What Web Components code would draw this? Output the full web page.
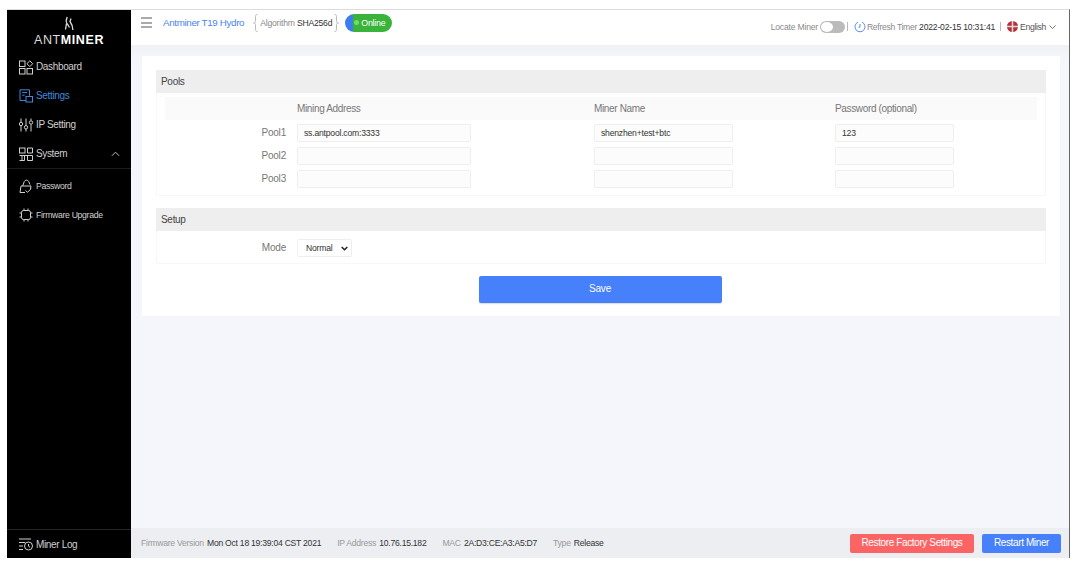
<!DOCTYPE html>
<html><head><meta charset="utf-8"><style>
html,body{margin:0;height:100%;background:#fff;font-family:"Liberation Sans",Arial,sans-serif}
body{padding:9px 6px 9px 7px;box-sizing:border-box;height:567px;overflow:hidden}
</style></head><body>
<am-app>
  <am-sidebar slot="side"></am-sidebar>
  <am-header slot="head"></am-header>
  <am-settings slot="main"></am-settings>
  <am-footer slot="foot"></am-footer>
</am-app>
<script>
const def=(n,html,init)=>customElements.define(n,class extends HTMLElement{
  constructor(){super();this.attachShadow({mode:'open'}).innerHTML=html;}
  connectedCallback(){init&&init(this)}
});
def('am-app',`<style>:host{display:grid;grid-template-columns:124px 1fr;grid-template-rows:35px 1fr 30px;height:549px;background:#f4f6fc;border-top:1px solid #dcdcdc;border-right:1px solid #666;box-sizing:border-box}
::slotted([slot=side]){grid-row:1/4}</style><slot name="side"></slot><slot name="head"></slot><slot name="main"></slot><slot name="foot"></slot>`);

def('am-nav',`<style>:host{display:flex;align-items:center;height:29px;padding-left:11px;font-size:10px;letter-spacing:-.35px;color:#d0d0d0;gap:2px;position:relative}
:host([active]){color:#3f88dc}:host([small]){font-size:8.700px;letter-spacing:-.33px}
svg{width:16px;height:16px;fill:none;stroke:currentColor;stroke-width:1;flex:none}
.c{margin-left:auto;margin-right:11px;display:flex}</style><span id="i" style="display:flex"></span><slot></slot>`,
 el=>{const p={
  dash:'<rect x="1.500" y="2" width="5.500" height="5.500"/><rect x="1.500" y="9.500" width="5.500" height="5.500"/><rect x="9" y="9.500" width="5.500" height="5.500"/><path d="M11.800 1.800l2.900 2.900-2.900 2.900-2.900-2.900z"/>',
  set:'<path d="M8 12.500H2V1.800h9.500v6"/><path d="M4.200 4.600h5M4.200 7.200h2.500"/><rect x="8" y="8.500" width="6.500" height="5.500"/>',
  ip:'<path d="M3 1.500v3.500M3 9v5.500M8 1.500v7M8 12v2.500M13 1.500v2M13 7.500v7"/><circle cx="3" cy="7" r="1.700"/><circle cx="8" cy="10.300" r="1.700"/><circle cx="13" cy="5.500" r="1.700"/>',
  sys:'<rect x="1.500" y="2" width="5.500" height="5"/><path d="M9.500 7V2h5v5h-5M1.500 9.500h13M4 9.500v5M1.500 14.500h5v-5M9.500 14.500h5v-5M9.500 9.500v5"/>',
  pw:'<path d="M7 14.500H2l1-6.500h10l-.5 3M4.700 8l1.600-4.500C7 1.800 9.800 1.600 10.600 3.400L12 6.500"/><path d="M7.500 12.500l2 1.800 3.500-3.500"/>',
  fw:'<rect x="3.500" y="3.500" width="9" height="9" rx="2"/><path d="M6 1.500v2M10 1.500v2M6 12.500v2M10 12.500v2M1.500 6h2M1.500 10h2M12.500 6h2M12.500 10h2"/>',
  log:'<path d="M1 3h12M1 6.500h6M1 10h4M1 13.500h4"/><circle cx="10.500" cy="10" r="4"/><path d="M10.500 8v2.200l1.500 1"/>'
 }[el.getAttribute('icon')];
 el.shadowRoot.getElementById('i').innerHTML='<svg viewBox="0 0 16 16">'+p+'</svg>';
 if(el.hasAttribute('chev')){const c=document.createElement('span');c.className='c';c.innerHTML='<svg viewBox="0 0 10 6" style="width:9px;height:6px"><path d="M1 5l4-4 4 4"/></svg>';el.shadowRoot.appendChild(c)}
});

def('am-sidebar',`<style>:host{display:flex;flex-direction:column;background:#000;color:#ddd}
.logo{height:35px;display:flex;flex-direction:column;align-items:center;padding-top:6px;font-size:12.500px;letter-spacing:.6px;color:#ddd;line-height:13px}
.logo svg{width:12px;height:16px;fill:none;stroke:#ddd;stroke-width:1.300;margin-bottom:2px;flex:none}
.logo b{color:#fff;font-weight:700}
.main{flex:1;padding-top:1px}
.sub{border-top:1px solid #1c1c1c;padding-top:2px}
.foot{border-top:1px solid #262626;height:28px;display:flex;align-items:center}
am-nav{flex:1}</style>
<div class="logo"><svg viewBox="0 0 12 16"><path d="M4.200 1L3.200 4.500c-.5 2 .6 3 1.800 4.500l1.500 2.500M8 2.500L7 5.500c1.600 2 2.600 4.500 2.900 8.500M3.500 7.500L2.500 13.500"/></svg><span>ANT<b>MINER</b></span></div>
<div class="main">
<am-nav icon="dash">Dashboard</am-nav>
<am-nav icon="set" active>Settings</am-nav>
<am-nav icon="ip">IP Setting</am-nav>
<am-nav icon="sys" chev>System</am-nav>
<div class="sub"><am-nav icon="pw" small>Password</am-nav><am-nav icon="fw" small>Firmware Upgrade</am-nav></div>
</div>
<div class="foot"><am-nav icon="log">Miner Log</am-nav></div>`);

def('am-header',`<style>:host{display:flex;align-items:center;background:#fff;height:35px;padding:0 13px 0 10px;font-size:8.600px;letter-spacing:-.2px;color:#8a8a8a;box-sizing:border-box}
.l{display:flex;align-items:center;margin-bottom:10px}
.burger{width:11px;height:11px;margin-right:11px;border-top:2px solid #aaa;border-bottom:2px solid #aaa;position:relative;box-sizing:border-box}
.burger:after{content:"";position:absolute;left:0;right:0;top:2.500px;border-top:2px solid #aaa}
.t{color:#4c84ef;font-size:9.800px;letter-spacing:-.35px;margin-right:9px}
.alg{display:flex;align-items:center;gap:2px;margin-right:6px}
.br{fill:none;stroke:#bbb;flex:none}
.v{color:#333}
.on{display:flex;align-items:center;height:18px;width:47px;border-radius:9px;background:linear-gradient(90deg,#3d7cf0 0,#3d7cf0 7px,#39b339 9px);color:#fff;font-size:8.800px;padding-left:9px;box-sizing:border-box;gap:2px}
.dot{width:5px;height:5px;border-radius:50%;background:#73e05a}
.sp{flex:1}
.r{display:flex;align-items:center;margin-bottom:2px}
.sw{width:25px;height:12px;border-radius:6px;background:#bbb;margin:0 2px;position:relative}
.sw:after{content:"";position:absolute;left:1px;top:1px;width:12px;height:10px;border-radius:50%;background:#fff}
.bar{width:1px;height:9px;background:#bbb;margin:0 6px 0 0}
.lang{color:#555;letter-spacing:-.33px}
.rt{letter-spacing:-.3px}.rt .v{letter-spacing:-.2px}
svg{flex:none}</style>
<div class="l"><div class="burger"></div><span class="t">Antminer T19 Hydro</span>
<div class="alg"><svg class="br" width="5" height="18" viewBox="0 0 5 18"><path d="M4.500 .5C2 .5 2.500 2 2.500 4v3.500C2.500 8.500 1.500 9 .5 9c1 0 2 .5 2 1.500V14c0 2-.5 3.500 2 3.500"/></svg><span>Algorithm&nbsp;<span class="v">SHA256d</span></span><svg class="br" width="5" height="18" viewBox="0 0 5 18" style="transform:scaleX(-1)"><path d="M4.500 .5C2 .5 2.500 2 2.500 4v3.500C2.500 8.500 1.500 9 .5 9c1 0 2 .5 2 1.500V14c0 2-.5 3.500 2 3.500"/></svg></div>
<div class="on"><span class="dot"></span>Online</div></div>
<div class="sp"></div>
<div class="r"><span>Locate Miner</span><span class="sw"></span><span class="bar"></span>
<svg width="12" height="12" viewBox="0 0 12 12" style="margin-right:1px" fill="none" stroke="#5c8cec"><path d="M4 1.200A5 5 0 1 0 8 1.200"/><path d="M6 3v3.200H4.500"/></svg>
<span class="rt">Refresh Timer&nbsp;<span class="v">2022-02-15 10:31:41</span></span><span class="bar" style="margin:0 6px 0 5px"></span>
<svg width="11" height="11" viewBox="0 0 11 11" style="margin-right:2px"><circle cx="5.500" cy="5.500" r="5.500" fill="#b5303a"/><path d="M5.500 0v11M0 5.500h11" stroke="#e8d5d5" stroke-width="1.600"/></svg>
<span class="lang">English</span>
<svg width="7" height="4" viewBox="0 0 7 4" style="margin-left:3px" fill="none" stroke="#777"><path d="M.5.5l3 3 3-3"/></svg></div>`);

def('am-section',`<style>:host{display:block;border:1px solid #f7f7f7;border-top:0}
.h{background:#eee;height:23px;line-height:23px;padding-left:5px;font-size:10px;letter-spacing:-.3px;color:#444;margin:0 -1px}</style>
<div class="h"><slot name="title"></slot></div><slot></slot>`);

def('am-input',`<style>:host{display:block}.i{height:18px;line-height:17px;box-sizing:border-box;border:1px solid #eee;border-radius:2px;background:#fcfcfc;font-size:8.600px;letter-spacing:-.2px;color:#333;padding-left:6px}</style><div class="i"><slot></slot></div>`);

def('am-settings',`<style>:host{display:block;padding:11px 9px 0 11px;background:linear-gradient(#eff1f5,#f4f6fc 14px)}
.card{background:#fff;padding:14px;height:260px;box-sizing:border-box;display:flex;flex-direction:column}
.grid{display:grid;grid-template-columns:140px 297px 241px 1fr;padding-bottom:2px;font-size:10px;letter-spacing:-.2px;color:#777}
.hd{grid-column:1/5;display:grid;grid-template-columns:132px 297px 241px 1fr;background:#fafafa;margin:4px 8px 4px 8px;height:23px;align-items:center;font-size:10px;letter-spacing:-.35px}
.hd span:first-child{grid-column:2}
.l{text-align:right;padding-right:11px;line-height:18px;margin-bottom:5px}
.a{width:174px}.b{width:139px}.c{width:119px}
am-input{margin-bottom:5px}
.mode{display:grid;grid-template-columns:140px 1fr;padding:8px 0 6px;font-size:10px;letter-spacing:-.2px;color:#777}
.sel{width:55px;height:18px;box-sizing:border-box;border:1px solid #eee;border-radius:2px;display:flex;align-items:center;font-size:8.600px;color:#333;padding-left:8px;gap:8px}
.save{align-self:center;margin:12px 2px 0 0;width:243px;height:27px;line-height:26px;text-align:center;background:#4680fb;color:#fff;font-size:10px;letter-spacing:-.2px;border-radius:2px;box-shadow:0 1px 1px #ddd;flex:none}
am-section+am-section{margin-top:12px}
</style>
<div class="card">
<am-section><span slot="title">Pools</span>
<div class="grid"><div class="hd"><span>Mining Address</span><span>Miner Name</span><span>Password (optional)</span></div>
<div class="l">Pool1</div><am-input class="a">ss.antpool.com:3333</am-input><am-input class="b">shenzhen+test+btc</am-input><am-input class="c">123</am-input>
<div class="l">Pool2</div><am-input class="a"></am-input><am-input class="b"></am-input><am-input class="c"></am-input>
<div class="l">Pool3</div><am-input class="a"></am-input><am-input class="b"></am-input><am-input class="c"></am-input>
</div></am-section>
<am-section><span slot="title">Setup</span>
<div class="mode"><div class="l" style="margin:0">Mode</div><div class="sel">Normal<svg width="7" height="5" viewBox="0 0 7 5" fill="none" stroke="#222" stroke-width="1.500"><path d="M.7 1l2.800 2.800L6.300 1"/></svg></div></div></am-section>
<div class="save">Save</div>
</div>`);

def('am-footer',`<style>:host{display:flex;align-items:center;background:#eceef2;height:30px;padding:0 8px 0 10px;font-size:8.600px;letter-spacing:-.25px;color:#999;box-sizing:border-box}
.v{color:#333;margin-left:1px}span.g{margin-right:16px}
.sp{flex:1}
.btn{height:19px;line-height:18px;border-radius:2px;color:#fff;text-align:center;font-size:10px;letter-spacing:-.38px}
.red{background:#fb6464;width:124px;margin-right:8px}.blue{background:#4680fb;width:79px}</style>
<span class="g">Firmware Version&nbsp;<span class="v">Mon Oct 18 19:39:04 CST 2021</span></span>
<span class="g">IP Address&nbsp;<span class="v">10.76.15.182</span></span>
<span class="g">MAC&nbsp;<span class="v">2A:D3:CE:A3:A5:D7</span></span>
<span class="g">Type&nbsp;<span class="v">Release</span></span>
<div class="sp"></div><div class="btn red">Restore Factory Settings</div><div class="btn blue">Restart Miner</div>`);
</script>
</body></html>
